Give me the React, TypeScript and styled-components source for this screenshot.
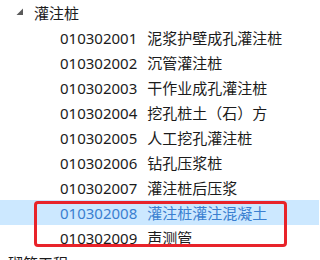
import React from "react";
import styled, { createGlobalStyle } from "styled-components";

const Global = createGlobalStyle`
  html, body { margin: 0; padding: 0; background: #ffffff; }
  body {
    font-family: "Noto Sans", "Noto Sans CJK SC", sans-serif;
    -webkit-font-smoothing: antialiased;
  }
`;

const Tree = styled.div`
  position: relative;
  width: 319px;
  height: 260px;
  overflow: hidden;
  background: #ffffff;
`;

const Row = styled.div<{ $indent: number; $selected?: boolean }>`
  display: flex;
  align-items: center;
  height: 25px;
  padding-left: ${(p) => p.$indent}px;
  background: ${(p) => (p.$selected ? "#cce8ff" : "transparent")};
  color: ${(p) => (p.$selected ? "#3a7fd0" : "#1b1b1b")};
  font-size: 15px;
  white-space: nowrap;
`;

const Toggle = styled.span`
  display: inline-flex;
  width: 18px;
  height: 25px;
  align-items: center;
  margin-top: -1px;
`;

const Code = styled.span`
  font-family: "Noto Sans", sans-serif;
  margin-right: 10px;
`;

const Name = styled.span`
  font-family: "Noto Sans CJK SC", sans-serif;
`;

const Marker = styled.div`
  position: absolute;
  left: 34px;
  top: 201px;
  width: 253px;
  height: 46px;
  box-sizing: border-box;
  border: 3.5px solid #e8232a;
  border-radius: 4px;
  pointer-events: none;
`;

const items: [string, string][] = [
  ["010302001", "泥浆护壁成孔灌注桩"],
  ["010302002", "沉管灌注桩"],
  ["010302003", "干作业成孔灌注桩"],
  ["010302004", "挖孔桩土（石）方"],
  ["010302005", "人工挖孔灌注桩"],
  ["010302006", "钻孔压浆桩"],
  ["010302007", "灌注桩后压浆"],
  ["010302008", "灌注桩灌注混凝土"],
  ["010302009", "声测管"],
];

export default function App() {
  return (
    <>
      <Global />
      <Tree>
        <Row $indent={16}>
          <Toggle>
            <svg width="8" height="8" viewBox="0 0 8 8">
              <polygon points="7,0.5 7,7 0.5,7" fill="#5a5a5a" />
            </svg>
          </Toggle>
          <Name>灌注桩</Name>
        </Row>
        {items.map(([code, name]) => (
          <Row key={code} $indent={60} $selected={code === "010302008"}>
            <Code>{code}</Code>
            <Name>{name}</Name>
          </Row>
        ))}
        <Row $indent={8}>
          <Name>砌筑工程</Name>
        </Row>
        <Marker />
      </Tree>
    </>
  );
}
